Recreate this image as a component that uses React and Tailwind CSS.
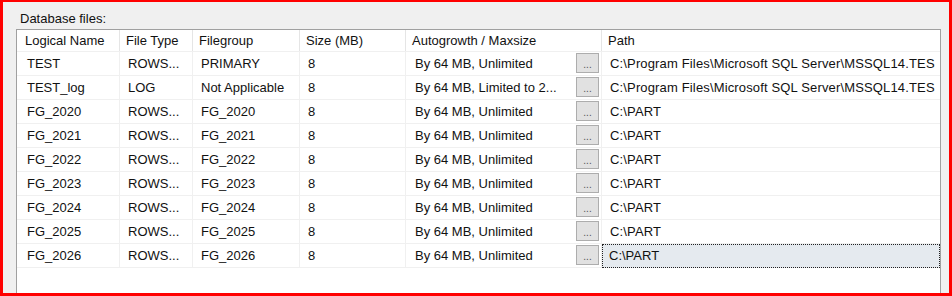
import React from 'react'

// Database files grid, SSMS style
const ROWS = [
  { name: 'TEST', type: 'ROWS...', group: 'PRIMARY', size: '8', growth: 'By 64 MB, Unlimited', path: 'C:\\Program Files\\Microsoft SQL Server\\MSSQL14.TES' },
  { name: 'TEST_log', type: 'LOG', group: 'Not Applicable', size: '8', growth: 'By 64 MB, Limited to 2...', path: 'C:\\Program Files\\Microsoft SQL Server\\MSSQL14.TES' },
  { name: 'FG_2020', type: 'ROWS...', group: 'FG_2020', size: '8', growth: 'By 64 MB, Unlimited', path: 'C:\\PART' },
  { name: 'FG_2021', type: 'ROWS...', group: 'FG_2021', size: '8', growth: 'By 64 MB, Unlimited', path: 'C:\\PART' },
  { name: 'FG_2022', type: 'ROWS...', group: 'FG_2022', size: '8', growth: 'By 64 MB, Unlimited', path: 'C:\\PART' },
  { name: 'FG_2023', type: 'ROWS...', group: 'FG_2023', size: '8', growth: 'By 64 MB, Unlimited', path: 'C:\\PART' },
  { name: 'FG_2024', type: 'ROWS...', group: 'FG_2024', size: '8', growth: 'By 64 MB, Unlimited', path: 'C:\\PART' },
  { name: 'FG_2025', type: 'ROWS...', group: 'FG_2025', size: '8', growth: 'By 64 MB, Unlimited', path: 'C:\\PART' },
  { name: 'FG_2026', type: 'ROWS...', group: 'FG_2026', size: '8', growth: 'By 64 MB, Unlimited', path: 'C:\\PART', selected: true },
]

const HEADERS = ['Logical Name', 'File Type', 'Filegroup', 'Size (MB)', 'Autogrowth / Maxsize', 'Path']

const GRID = 'grid grid-cols-[103px_73px_107px_106px_196px_1fr]'

function Cell({ children, first, last }) {
  return (
    <div
      className={`h-[24px] flex items-center border-b border-[#f0f0f0] overflow-hidden whitespace-nowrap ${last ? 'tracking-[0.15px]' : 'border-r'} ${first ? 'pl-[10px]' : 'pl-[8px]'}`}
    >
      {children}
    </div>
  )
}

export default function App() {
  return (
    <div
      className="w-[952px] h-[296px] bg-[#f0f0f0] border-[#ff0000] border-l-[3px] border-t-[2px] border-r-[3px] border-b-[3px] flex flex-col text-[13px] text-[#111] overflow-hidden"
      style={{ fontFamily: '"Liberation Sans", Arial, sans-serif' }}
    >
      <div className="h-[27px] pl-[17px] pt-[9px] leading-[15px]">Database files:</div>

      <div className="flex-1 ml-[13px] mr-[8px] bg-white border-l border-t border-r border-[#a0a0a0] overflow-hidden">
        <div className={`${GRID} h-[22px] border-b border-[#f0f0f0]`}>
          {HEADERS.map((h, i) => (
            <div
              key={h}
              className={`flex items-center whitespace-nowrap ${i === 0 ? 'pl-[8px]' : 'pl-[6px]'} ${i < 5 ? 'border-r border-[#e5e5e5]' : ''}`}
            >
              {h}
            </div>
          ))}
        </div>

        {ROWS.map((r) => (
          <div key={r.name} className={GRID}>
            <Cell first>{r.name}</Cell>
            <Cell>{r.type}</Cell>
            <Cell>{r.group}</Cell>
            <Cell>{r.size}</Cell>
            <div className="h-[24px] flex items-center border-b border-r border-[#f0f0f0] pl-[9px] pr-[2px] whitespace-nowrap">
              <span className="flex-1 overflow-hidden">{r.growth}</span>
              <span className="w-[23px] h-[20px] mb-[1px] bg-[#e1e1e1] border border-[#adadad] flex items-end justify-center text-[10px] leading-[14px] text-[#555]">
                ...
              </span>
            </div>
            {r.selected ? (
              <div className="h-[24px] flex items-center bg-[#e5eaef] border border-dotted border-[#222] pl-[6px] whitespace-nowrap overflow-hidden">
                {r.path}
              </div>
            ) : (
              <Cell last>{r.path}</Cell>
            )}
          </div>
        ))}
      </div>
    </div>
  )
}
